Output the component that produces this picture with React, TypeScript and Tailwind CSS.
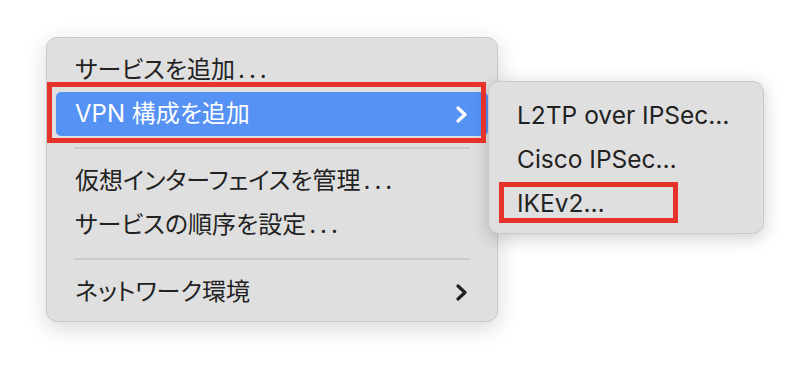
import React from "react";

const Chevron = ({ color }: { color: string }) => (
  <svg width="11" height="17" viewBox="0 0 11 17" fill="none">
    <path d="M2 2 L9 8.5 L2 15" stroke={color} strokeWidth="3.2" strokeLinecap="round" strokeLinejoin="round" />
  </svg>
);

const Dots = () => <span className="ml-[3px] tracking-[4px]">...</span>;

export default function App() {
  return (
    <div className="relative w-[810px] h-[376px] bg-white overflow-hidden font-['Inter','Noto_Sans_CJK_JP',sans-serif] [font-feature-settings:'palt'] text-[24px] text-[#222222]">
      <div className="pl-[46px] pt-[37px]">
        <div className="w-[452px] rounded-[11px] bg-[#dfdfdf] border border-[#c9c9c9] shadow-[0_6px_22px_rgba(0,0,0,0.16)] pt-[10px] pb-[7px] px-[9px]">
          <div className="h-[44px] flex items-center pl-[19px] pr-[21px]">
            <span>サービスを追加<Dots /></span>
          </div>
          <div className="h-[44px] flex items-center justify-between pl-[19px] pr-[21px] rounded-[5px] bg-[#5691f4] text-white">
            <span>VPN 構成を追加</span>
            <Chevron color="#ffffff" />
          </div>
          <div className="h-[23px] flex items-center px-[18px]">
            <div className="h-[2px] w-full bg-[#cbcbcb]" />
          </div>
          <div className="h-[44px] flex items-center pl-[19px] pr-[21px]">
            <span>仮想インターフェイスを管理<Dots /></span>
          </div>
          <div className="h-[44px] flex items-center pl-[19px] pr-[21px]">
            <span>サービスの順序を設定<Dots /></span>
          </div>
          <div className="h-[23px] flex items-center px-[18px]">
            <div className="h-[2px] w-full bg-[#cbcbcb]" />
          </div>
          <div className="h-[44px] flex items-center justify-between pl-[19px] pr-[21px]">
            <span>ネットワーク環境</span>
            <Chevron color="#222222" />
          </div>
        </div>
      </div>

      <div className="absolute left-[488px] top-[81px] w-[276px] rounded-[11px] bg-[#dfdfdf] border border-[#c9c9c9] shadow-[0_4px_18px_rgba(0,0,0,0.2)] pt-[11px] pb-[8px] px-[9px] text-[24.5px]">
        <div className="h-[44px] flex items-center pl-[19px]">L2TP over IPSec…</div>
        <div className="h-[44px] flex items-center pl-[19px]">Cisco IPSec…</div>
        <div className="h-[44px] flex items-center pl-[19px]">IKEv2…</div>
      </div>

      <div className="absolute left-[47px] top-[82px] w-[439px] h-[61px] border-[5px] border-[#e5332a]" />
      <div className="absolute left-[499px] top-[182px] w-[179px] h-[41px] border-[5px] border-[#e5332a]" />
    </div>
  );
}
